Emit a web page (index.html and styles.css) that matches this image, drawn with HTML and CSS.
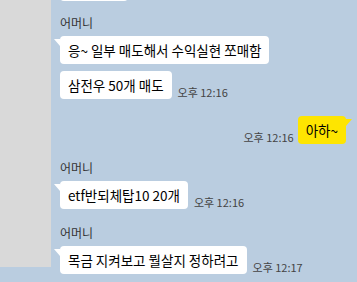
FILE: index.html
```html
<!DOCTYPE html>
<html>
<head>
    <meta charset="utf-8">
    <title>채팅</title>
    <link rel="stylesheet" href="styles.css">
</head>
<body>
<div class="room">
    <div class="side"></div>
    <div class="chat">
        <div class="row">
            <div class="bubble cut"></div>
        </div>

        <div class="group top">
            <div class="name">어머니</div>
            <div class="row">
                <div class="bubble first">응~ 일부 매도해서 수익실현 쪼매함</div>
            </div>
            <div class="row">
                <div class="bubble">삼전우 50개 매도</div>
                <span class="time">오후 12:16</span>
            </div>
        </div>

        <div class="row mine">
            <span class="time">오후 12:16</span>
            <div class="bubble yellow">아하~</div>
        </div>

        <div class="group">
            <div class="name">어머니</div>
            <div class="row">
                <div class="bubble first">etf반되체탑10 20개</div>
                <span class="time">오후 12:16</span>
            </div>
        </div>

        <div class="group">
            <div class="name">어머니</div>
            <div class="row">
                <div class="bubble first">목금 지켜보고 뭘살지 정하려고</div>
                <span class="time">오후 12:17</span>
            </div>
        </div>
    </div>
</div>
</body>
</html>
```

FILE: styles.css
```css
html
{
    background: #bacde0;
}
body
{
    margin: 0;
    color: #000;
    font-family: "Noto Sans CJK KR", "Noto Sans", sans-serif;
    font-size: 13.5px;
}
.room
{
    display: flex;
    align-items: flex-start;
}
.side
{
    width: 51px;
    height: 267px;
    background: #d9d9d9;
    flex-shrink: 0;
}
.chat
{
    flex: 1;
    padding: 0 11px 0 9px;
}
.row
{
    display: flex;
    align-items: flex-end;
    margin-bottom: 7px;
}
.mine
{
    justify-content: flex-end;
    margin: 17px 0 16px;
}
.group
{
    margin-top: 16px;
}
.top
{
    margin-top: 14px;
}
.name
{
    font-size: 12px;
    line-height: 16px;
    color: #333;
    margin-bottom: 5px;
}
.bubble
{
    position: relative;
    background: #fff;
    border-radius: 4px;
    height: 28px;
    line-height: 28px;
    padding: 0 8px;
    white-space: nowrap;
}
.cut
{
    width: 68px;
    padding: 0;
    margin-top: -27px;
}
.first::before
{
    content: "";
    position: absolute;
    left: -6px;
    top: 3px;
    border-right: 6px solid #fff;
    border-bottom: 7px solid transparent;
}
.yellow
{
    background: #fee500;
}
.yellow::after
{
    content: "";
    position: absolute;
    right: -6px;
    top: 3px;
    border-left: 6px solid #fee500;
    border-bottom: 7px solid transparent;
}
.time
{
    font-size: 11px;
    line-height: 13px;
    color: #444;
    margin: 0 6px;
    white-space: nowrap;
}
.mine .time
{
    margin: 0 4px 0 0;
}
```
